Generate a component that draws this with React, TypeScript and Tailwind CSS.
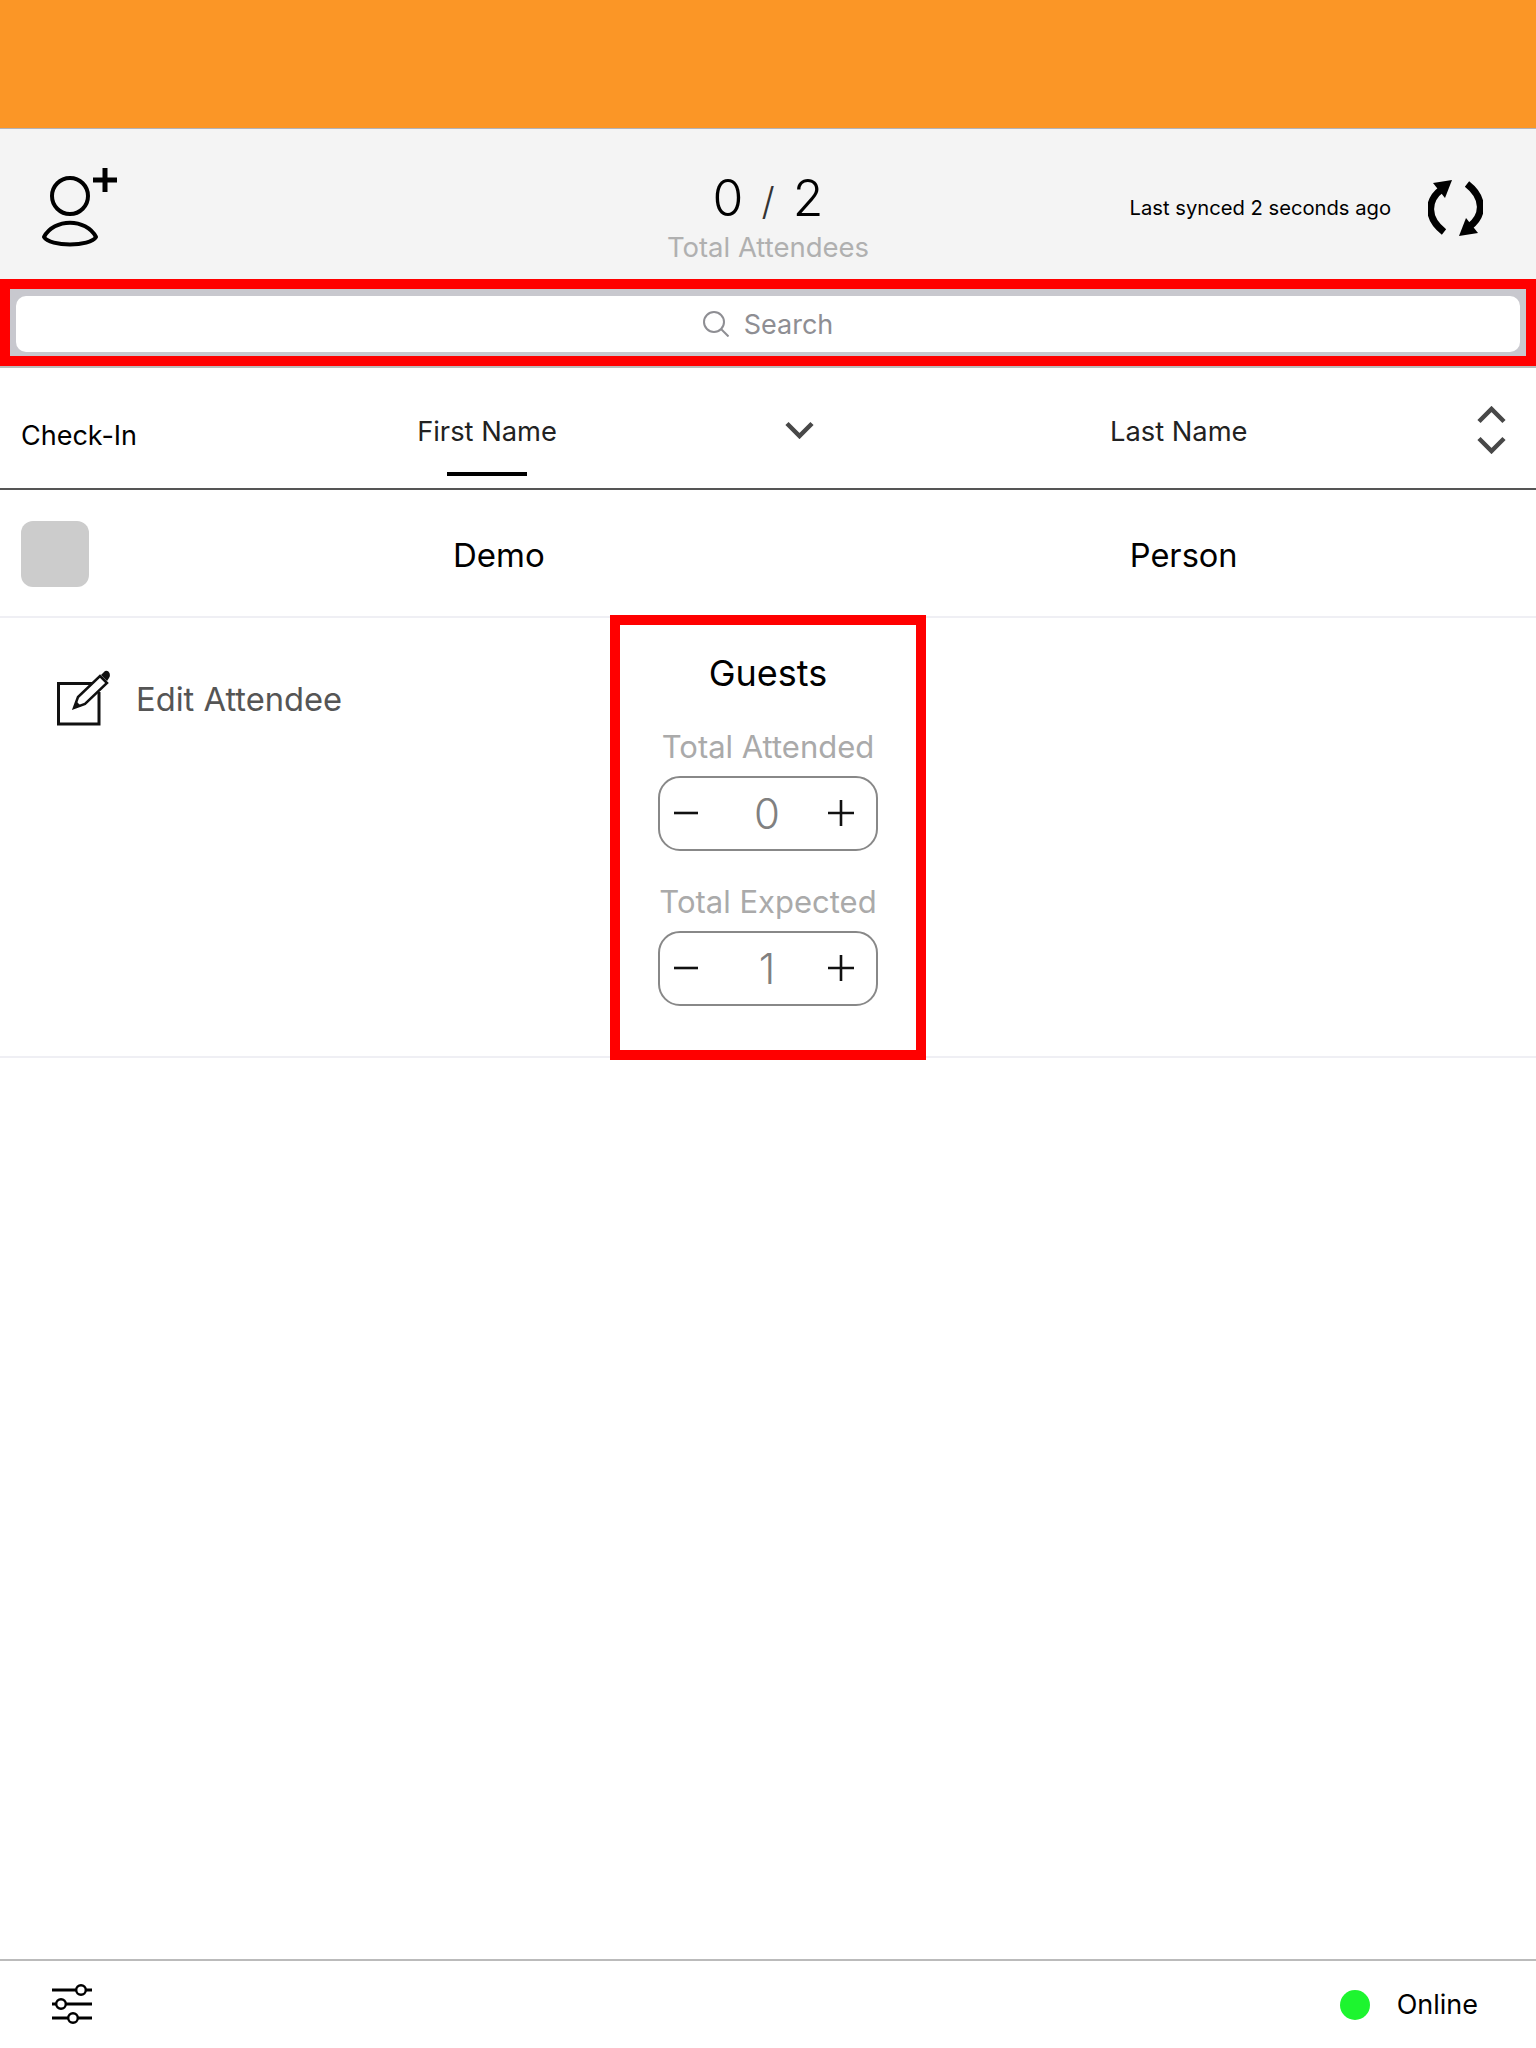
const font = "font-['Inter','Liberation_Sans',sans-serif]";

function Stepper({ value }: { value: string }) {
  return (
    <div className="flex h-[75px] w-[220px] items-center justify-between rounded-[22px] border-2 border-[#888888] pl-[14px] pr-[22px]">
      <svg className="-mt-[2px]" width="24" height="4" viewBox="0 0 24 4"><path d="M0 2h24" stroke="#111" strokeWidth="2.6" /></svg>
      <span className="ml-[8px] text-[42px] leading-none font-light text-[#808080]">{value}</span>
      <svg className="-mt-[2px]" width="26" height="26" viewBox="0 0 26 26"><path d="M0 13h26M13 0v26" stroke="#111" strokeWidth="2.6" /></svg>
    </div>
  );
}

function Chevron({ up }: { up?: boolean }) {
  return (
    <svg width="29" height="18" viewBox="0 0 29 18" fill="none" stroke="#484848" strokeWidth="4.5">
      <path d={up ? "M2 15.5L14.5 3L27 15.5" : "M2 2.5L14.5 15L27 2.5"} />
    </svg>
  );
}

export default function App() {
  return (
    <div className={`flex h-[2048px] w-[1536px] flex-col bg-white ${font}`}>
      <div className="h-[128px] bg-[#fb9626]" />
      <div className="grid h-[151px] grid-cols-[1fr_auto_1fr] items-center border-t border-[#b2b2b8] bg-[#f4f4f4] pr-[53px] pl-[40px]">
        <svg className="mt-[2px]" width="80" height="90" viewBox="0 0 80 90" fill="none" stroke="#000">
          <circle cx="30" cy="36" r="18" strokeWidth="4" />
          <path d="M4 77 C14 58 46 58 56 77 C50 87 10 87 4 77 Z" strokeWidth="4" strokeLinejoin="round" />
          <path d="M53 20h24M65 8v24" strokeWidth="5" />
        </svg>
        <div className="ml-[13px] flex flex-col items-center pt-[25px]">
          <div className="flex h-[60px] items-center text-[50px] leading-[60px] font-light text-black">
            <span>0</span>
            <span className="mx-[18px] mt-[6px] text-[38px] leading-none text-[#333]">/</span>
            <span>2</span>
          </div>
          <div className="mt-[1px] text-[27.5px] leading-[36px] text-[#b0b0b0]">Total Attendees</div>
        </div>
        <div className="mt-[8px] flex items-center justify-end gap-[37px]">
          <span className="text-[20.2px] leading-none text-black">Last synced 2 seconds ago</span>
          <svg width="55" height="56" viewBox="0 0 55 56" fill="none">
            <path d="M16 52 C-2 38 -1 20 14 9" stroke="#000" strokeWidth="7" />
            <path d="M24 0 L5 3 L17 18 Z" fill="#000" />
            <path d="M39 4 C57 18 56 36 41 47" stroke="#000" strokeWidth="7" />
            <path d="M31 56 L50 53 L38 38 Z" fill="#000" />
          </svg>
        </div>
      </div>
      <div className="h-[87px] border-[10px] border-[#ff0000] bg-[#c8c8ce] px-[6px] pt-[7px]">
        <div className="flex h-[56px] items-center justify-center gap-[15px] rounded-[10px] bg-white">
          <svg width="26" height="26" viewBox="0 0 26 26" fill="none" stroke="#8e8e93" strokeWidth="2">
            <circle cx="11" cy="11" r="10" />
            <path d="M18 18l7.5 7.5" />
          </svg>
          <span className="text-[27px] leading-none text-[#8e8e93]">Search</span>
        </div>
      </div>
      <div className="flex h-[124px] items-start border-t-2 border-b-2 border-t-[#bbbbbb] border-b-[#555555] pl-[21px]">
        <span className="mt-[54px] w-[397px] whitespace-nowrap text-[27px] leading-none text-black">Check-In</span>
        <div className="mt-[50px] flex w-[138px] flex-col items-center">
          <span className="whitespace-nowrap text-[27.3px] leading-none text-[#222]">First Name</span>
          <div className="mt-[27px] h-[4px] w-[80px] bg-black" />
        </div>
        <div className="mt-[53px] ml-[229px]"><Chevron /></div>
        <span className="mt-[50px] ml-[296px] w-[138px] whitespace-nowrap text-[27.3px] leading-none text-[#222]">Last Name</span>
        <div className="mt-[38px] ml-[229px] flex flex-col gap-[12px]">
          <Chevron up />
          <Chevron />
        </div>
      </div>
      <div className="flex h-[128px] items-center border-b-2 border-[#efeff4] pl-[21px]">
        <div className="mt-[2px] h-[66px] w-[68px] rounded-[12px] bg-[#cccccc]" />
        <span className="mt-[4px] ml-[364px] text-[33px] leading-none text-black">Demo</span>
        <span className="mt-[4px] ml-[585px] text-[32.6px] leading-none text-black">Person</span>
      </div>
      <div className="flex h-[440px] items-start border-b-2 border-[#efeff4]">
        <div className="mt-[52px] ml-[55px] flex w-[555px] items-center gap-[26px]">
          <svg width="55" height="58" viewBox="0 0 55 58" fill="none" stroke="#111">
            <path d="M37 13.5H3.5V54H44V22" strokeWidth="3" />
            <path d="M19 38L23 27L45 6L52 13L30 34Z" strokeWidth="2.5" />
            <path d="M19 38L21 31L26 36Z" fill="#111" stroke="none" />
            <path d="M46 5L50 1Q53 0 54.5 3Q55.5 6 54 8L52 11Z" fill="#111" stroke="none" />
          </svg>
          <span className="text-[32.7px] leading-none text-[#555555]">Edit Attendee</span>
        </div>
        <div className="-mt-[3px] flex h-[445px] w-[316px] flex-col items-center border-[10px] border-[#ff0000] bg-white">
          <span className="mt-[30px] text-[36px] leading-[36px] text-black">Guests</span>
          <span className="mt-[38px] text-[31px] leading-[36px] text-[#aaaaaa]">Total Attended</span>
          <div className="mt-[11px]"><Stepper value="0" /></div>
          <span className="mt-[33px] text-[31px] leading-[36px] text-[#aaaaaa]">Total Expected</span>
          <div className="mt-[11px]"><Stepper value="1" /></div>
        </div>
      </div>
      <div className="flex-1" />
      <div className="flex h-[89px] items-center justify-between border-t-2 border-[#bbbbbb] pr-[58px] pl-[52px]">
        <svg className="-mt-[2px]" width="40" height="44" viewBox="0 0 40 44" fill="none" stroke="#000" strokeWidth="3">
          <path d="M0 8h40M0 22h40M0 36h40" />
          <circle cx="29" cy="8" r="4.8" fill="#fff" strokeWidth="2.4" />
          <circle cx="9" cy="22" r="4.8" fill="#fff" strokeWidth="2.4" />
          <circle cx="21" cy="36" r="4.8" fill="#fff" strokeWidth="2.4" />
        </svg>
        <div className="flex items-center gap-[27px]">
          <div className="h-[30px] w-[30px] rounded-full bg-[#1df52f]" />
          <span className="text-[27px] leading-none text-black">Online</span>
        </div>
      </div>
    </div>
  );
}
